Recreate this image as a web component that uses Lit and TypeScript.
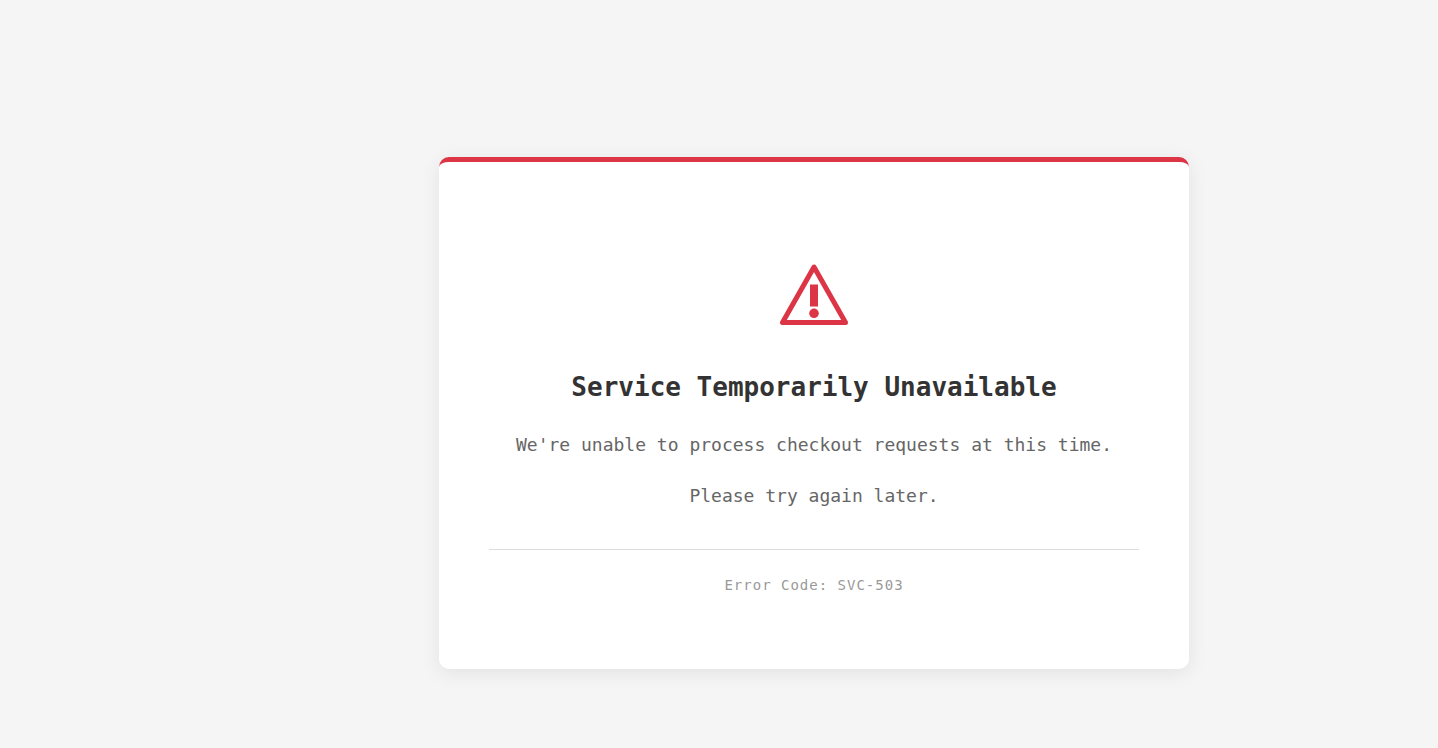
import { LitElement, html, css } from "lit";
import { customElement } from "lit/decorators.js";

@customElement("app-root")
export class AppRoot extends LitElement {
  static styles = css`
    :host {
      display: flex;
      align-items: center;
      justify-content: center;
      box-sizing: border-box;
      min-height: 100vh;
      padding: 78px 0 0 190px;
      background: #f5f5f5;
      font-family: Consolas, "DejaVu Sans Mono", monospace;
      text-align: center;
    }
    .card {
      box-sizing: border-box;
      width: 100%;
      max-width: 750px;
      padding: 60px 50px;
      background: #fff;
      border-top: 5px solid #dc3545;
      border-radius: 10px;
      box-shadow: 0 4px 20px rgba(0, 0, 0, 0.08);
    }
    .icon {
      display: flex;
      align-items: center;
      justify-content: center;
      height: 145px;
      color: #dc3545;
    }
    .title {
      margin: 0 0 20px;
      font-size: 26px;
      line-height: 40px;
      font-weight: 700;
      color: #333;
    }
    .message {
      margin: 0 0 15px;
      font-size: 18px;
      line-height: 36px;
      color: #666;
    }
    .code {
      margin: 35px 0 9px;
      padding-top: 20px;
      border-top: 1px solid #ddd;
      font-size: 14px;
      line-height: 30px;
      letter-spacing: 1px;
      color: #999;
    }
  `;

  render() {
    return html`
      <main class="card">
        <div class="icon">
          <svg width="70" height="62" viewBox="0 0 70 62" aria-hidden="true">
            <path d="M35 3 L3.5 58.5 H66.5 Z" fill="none" stroke="currentColor" stroke-width="5" stroke-linejoin="round" />
            <rect x="31" y="20.5" width="8" height="22" fill="currentColor" />
            <circle cx="35" cy="49.3" r="4.8" fill="currentColor" />
          </svg>
        </div>
        <h1 class="title">Service Temporarily Unavailable</h1>
        <p class="message">We're unable to process checkout requests at this time.</p>
        <p class="message">Please try again later.</p>
        <p class="code">Error Code: SVC-503</p>
      </main>
    `;
  }
}
